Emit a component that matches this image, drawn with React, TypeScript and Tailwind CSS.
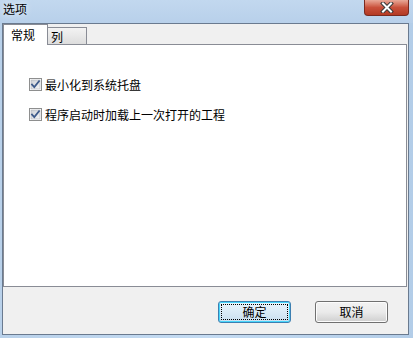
import React, { useState } from 'react';

const font = { fontFamily: '"Noto Sans CJK SC", "Liberation Sans", sans-serif' };

const CheckBox = ({ checked }: { checked: boolean }) => (
  <svg width="13" height="13" viewBox="0 0 13 13" className="shrink-0">
    <defs>
      <linearGradient id="cbfill" x1="0" y1="0" x2="1" y2="1">
        <stop offset="0" stopColor="#cbcfd5" />
        <stop offset="1" stopColor="#f6f6f6" />
      </linearGradient>
    </defs>
    <rect x="0.5" y="0.5" width="12" height="12" fill="#ffffff" stroke="#8e8f8f" />
    <rect x="2" y="2" width="9" height="9" fill="url(#cbfill)" stroke="#aeb3b9" strokeWidth="0.6" />
    {checked && (
      <path d="M3 6.5 L5.3 9 L10 3.2" fill="none" stroke="#3d5a8a" strokeWidth="1.8" strokeLinecap="square" />
    )}
  </svg>
);

const CloseButton = () => (
  <div className="w-[45px] h-[16px] rounded-b-[4px] border border-t-0 border-[#7a2a20] bg-gradient-to-b from-[#e8a898] via-[#c9503b] to-[#b33a24] flex items-center justify-center">
    <svg width="14" height="11" viewBox="0 0 14 11">
      <path d="M3 1.5 L11 9.5 M11 1.5 L3 9.5" stroke="#3a3a3a" strokeWidth="4" strokeLinecap="square" />
      <path d="M3 1.5 L11 9.5 M11 1.5 L3 9.5" stroke="#ffffff" strokeWidth="2" strokeLinecap="square" />
    </svg>
  </div>
);

const Button = ({ label, isDefault }: { label: string; isDefault?: boolean }) => (
  <button
    className={`w-[73px] h-[22px] rounded-[3px] border text-[12px] text-black flex items-center justify-center p-[2px] ${
      isDefault
        ? 'border-[#3c7fb1] shadow-[inset_0_0_0_1px_#48d6fb] bg-gradient-to-b from-[#eaf6fd] to-[#c9dff0]'
        : 'border-[#707070] shadow-[inset_0_0_0_1px_#fcfcfc] bg-gradient-to-b from-[#f2f2f2] via-[#ebebeb] to-[#cfcfcf]'
    }`}
    style={font}
  >
    <span
      className={`w-full h-full flex items-center justify-center ${
        isDefault ? 'border border-dotted border-black' : ''
      }`}
    >
      {label}
    </span>
  </button>
);

export default function App() {
  const [tab, setTab] = useState(0);
  const [opts, setOpts] = useState([true, true]);

  const toggle = (i: number) => setOpts((o) => o.map((v, j) => (j === i ? !v : v)));

  return (
    <div className="w-[413px] h-[338px] flex flex-col bg-gradient-to-r from-[#b9d1ea] via-[#c4dbf2] to-[#b3cde8] overflow-hidden" style={font}>
      {/* title bar */}
      <div className="h-[23px] flex items-start justify-between pl-[3px] pr-[4px] bg-gradient-to-b from-[#c2d8ef] to-[#b8d0ea]">
        <span className="text-[12px] leading-[12px] mt-[3px] text-black [text-shadow:0_0_6px_#ffffff]">选项</span>
        <CloseButton />
      </div>

      {/* client area */}
      <div className="flex-1 flex flex-col ml-[2px] mr-[4px] mb-[3px] border border-[#6a7a8f] bg-[#f0f0f0]">
        {/* tabs */}
        <div className="flex items-end h-[21px] pr-[1px]">
          <div
            onClick={() => setTab(0)}
            className={`relative z-10 w-[45px] flex items-center px-[7px] text-[12px] text-black border border-b-0 border-[#898c95] ${
              tab === 0 ? 'h-[21px] bg-white' : 'h-[18px] bg-gradient-to-b from-[#f3f3f3] to-[#dcdcdc]'
            }`}
          >
            常规
          </div>
          <div
            onClick={() => setTab(1)}
            className={`w-[39px] flex items-center px-[3px] text-[12px] text-black border border-b-0 border-l-0 border-[#898c95] ${
              tab === 1 ? 'h-[21px] bg-white' : 'h-[18px] bg-gradient-to-b from-[#f3f3f3] to-[#dcdcdc]'
            }`}
          >
            列
          </div>
        </div>
        <div className="h-[243px] mr-[1px] -mt-px border border-[#898c95] bg-white">
          {tab === 0 && (
            <div className="flex flex-col gap-[17px] pt-[33px] pl-[25px]">
              {['最小化到系统托盘', '程序启动时加载上一次打开的工程'].map((t, i) => (
                <label key={t} className="flex items-center gap-[3px] text-[12px] leading-[13px] text-black" onClick={() => toggle(i)}>
                  <CheckBox checked={opts[i]} />
                  <span>{t}</span>
                </label>
              ))}
            </div>
          )}
        </div>

        {/* buttons */}
        <div className="flex justify-end gap-[24px] pt-[14px] pr-[20px]">
          <Button label="确定" isDefault />
          <Button label="取消" />
        </div>
      </div>
    </div>
  );
}
